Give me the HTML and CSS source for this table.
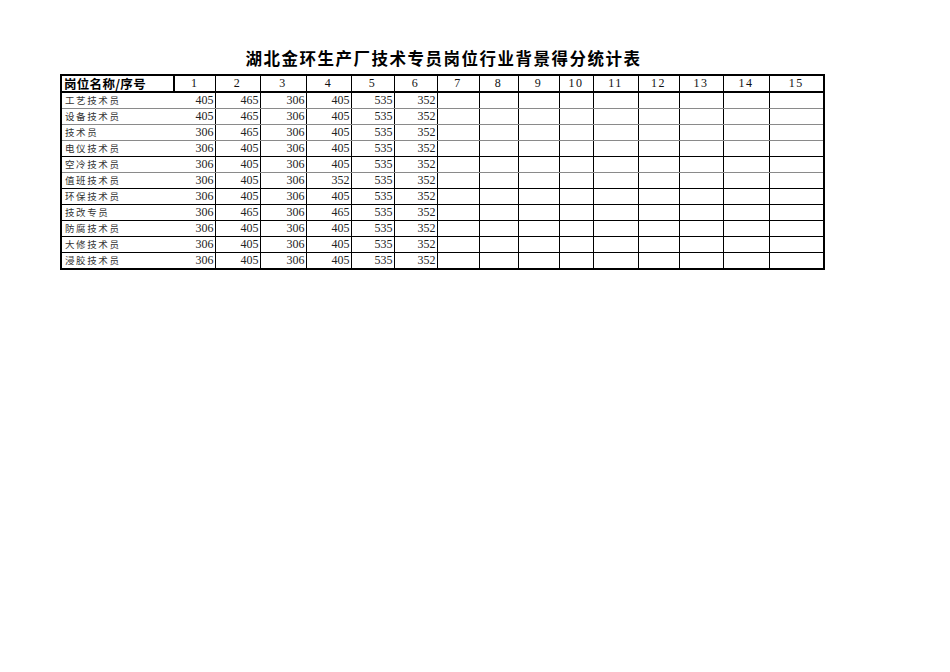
FILE: index.html
```html
<!DOCTYPE html>
<html lang="zh">
<head>
<meta charset="utf-8">
<title>湖北金环生产厂技术专员岗位行业背景得分统计表</title>
<link rel="stylesheet" href="styles.css">
</head>
<body>
<div class="sheet">
  <h1 class="title">湖北金环生产厂技术专员岗位行业背景得分统计表</h1>
  <table class="grid">
    <colgroup>
      <col class="c-name"><col class="w41"><col class="w45"><col class="w46"><col class="w45"><col class="w43"><col class="w43"><col class="w42"><col class="w39"><col class="w41"><col class="w34"><col class="w45"><col class="w41"><col class="w44"><col class="w46"><col class="w55">
    </colgroup>
    <thead>
      <tr>
        <th class="hname">岗位名称/序号</th>
        <th class="hfirst">1</th><th>2</th><th>3</th><th>4</th><th>5</th><th>6</th><th>7</th><th>8</th><th>9</th><th>10</th><th>11</th><th>12</th><th>13</th><th>14</th><th>15</th>
      </tr>
    </thead>
    <tbody>
      <tr class="g"><td class="name">工艺技术员</td><td>405</td><td>465</td><td>306</td><td>405</td><td>535</td><td>352</td><td></td><td></td><td></td><td></td><td></td><td></td><td></td><td></td><td></td></tr>
      <tr class="g"><td class="name">设备技术员</td><td>405</td><td>465</td><td>306</td><td>405</td><td>535</td><td>352</td><td></td><td></td><td></td><td></td><td></td><td></td><td></td><td></td><td></td></tr>
      <tr class="g"><td class="name">技术员</td><td>306</td><td>465</td><td>306</td><td>405</td><td>535</td><td>352</td><td></td><td></td><td></td><td></td><td></td><td></td><td></td><td></td><td></td></tr>
      <tr><td class="name">电仪技术员</td><td>306</td><td>405</td><td>306</td><td>405</td><td>535</td><td>352</td><td></td><td></td><td></td><td></td><td></td><td></td><td></td><td></td><td></td></tr>
      <tr class="g"><td class="name">空冷技术员</td><td>306</td><td>405</td><td>306</td><td>405</td><td>535</td><td>352</td><td></td><td></td><td></td><td></td><td></td><td></td><td></td><td></td><td></td></tr>
      <tr><td class="name">值班技术员</td><td>306</td><td>405</td><td>306</td><td>352</td><td>535</td><td>352</td><td></td><td></td><td></td><td></td><td></td><td></td><td></td><td></td><td></td></tr>
      <tr><td class="name">环保技术员</td><td>306</td><td>405</td><td>306</td><td>405</td><td>535</td><td>352</td><td></td><td></td><td></td><td></td><td></td><td></td><td></td><td></td><td></td></tr>
      <tr><td class="name">技改专员</td><td>306</td><td>465</td><td>306</td><td>465</td><td>535</td><td>352</td><td></td><td></td><td></td><td></td><td></td><td></td><td></td><td></td><td></td></tr>
      <tr><td class="name">防腐技术员</td><td>306</td><td>405</td><td>306</td><td>405</td><td>535</td><td>352</td><td></td><td></td><td></td><td></td><td></td><td></td><td></td><td></td><td></td></tr>
      <tr><td class="name">大修技术员</td><td>306</td><td>405</td><td>306</td><td>405</td><td>535</td><td>352</td><td></td><td></td><td></td><td></td><td></td><td></td><td></td><td></td><td></td></tr>
      <tr><td class="name">浸胶技术员</td><td>306</td><td>405</td><td>306</td><td>405</td><td>535</td><td>352</td><td></td><td></td><td></td><td></td><td></td><td></td><td></td><td></td><td></td></tr>
    </tbody>
  </table>
</div>
</body>
</html>
```

FILE: styles.css
```css
html, body {
  margin: 0;
  padding: 0;
  background: #ffffff;
}

.sheet {
  padding: 46px 0 0 60px;
  width: 765px;
}

.title {
  margin: 0 0 4px 0;
  height: 24px;
  line-height: 24px;
  text-align: center;
  font-family: "Noto Sans CJK SC", sans-serif;
  font-weight: 700;
  font-size: 16.5px;
  letter-spacing: 1.5px;
  color: #000;
  padding-left: 2px;
}

.grid {
  border-collapse: collapse;
  table-layout: fixed;
  width: 764px;
  border: 2px solid #000;
}

.c-name { width: 113px; }
.w34 { width: 34px; }
.w39 { width: 39px; }
.w41 { width: 41px; }
.w42 { width: 42px; }
.w43 { width: 43px; }
.w44 { width: 44px; }
.w45 { width: 45px; }
.w46 { width: 46px; }
.w55 { width: 55px; }

.grid th {
  height: 15px;
  padding: 0;
  border-left: 1px solid #000;
  border-bottom: 2px solid #000;
  font-family: "Liberation Serif", serif;
  font-weight: 400;
  font-size: 12px;
  letter-spacing: 1.5px;
  line-height: 15px;
  text-align: center;
  color: #111;
  overflow: hidden;
  white-space: nowrap;
}

.grid th.hname {
  border-left: none;
  text-align: left;
  padding-left: 2px;
  font-family: "Noto Sans CJK SC", sans-serif;
  font-weight: 700;
  font-size: 12.5px;
  letter-spacing: 0.3px;
  color: #000;
}

.grid th.hfirst {
  border-left: 2px solid #000;
}

.grid td {
  height: 15px;
  padding: 0 1px 0 0;
  border-left: 1px solid #000;
  border-bottom: 1px solid #000;
  font-family: "Liberation Serif", serif;
  font-size: 12px;
  line-height: 15px;
  text-align: right;
  color: #222;
  overflow: hidden;
  white-space: nowrap;
}

.grid tr.g td {
  border-bottom-color: #8a8a8a;
}

.grid td.name {
  border-left: none;
  text-align: left;
  padding: 0 0 0 3px;
  font-family: "Noto Sans CJK SC", sans-serif;
  font-size: 9.5px;
  letter-spacing: 1.6px;
  color: #333;
}

.grid td.name + td {
  border-left: none;
}
```
